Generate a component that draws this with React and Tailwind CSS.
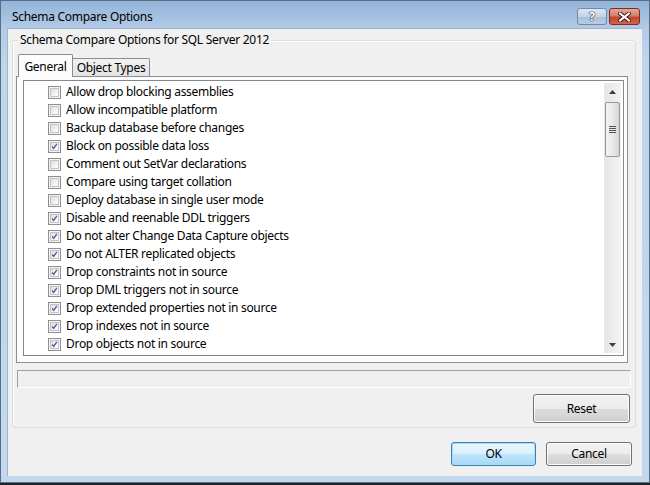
import React from "react";

const options = [
  ["Allow drop blocking assemblies", false],
  ["Allow incompatible platform", false],
  ["Backup database before changes", false],
  ["Block on possible data loss", true],
  ["Comment out SetVar declarations", false],
  ["Compare using target collation", false],
  ["Deploy database in single user mode", false],
  ["Disable and reenable DDL triggers", true],
  ["Do not alter Change Data Capture objects", true],
  ["Do not ALTER replicated objects", true],
  ["Drop constraints not in source", true],
  ["Drop DML triggers not in source", true],
  ["Drop extended properties not in source", true],
  ["Drop indexes not in source", true],
  ["Drop objects not in source", true],
];

const CheckBox = ({ checked }) => (
  <div className="w-[13px] h-[13px] shrink-0 border border-[#8e8f8f] bg-[#f4f4f4] p-[1px]">
    <div className="w-full h-full border border-[#c3c3c3] bg-[linear-gradient(135deg,#dcdcdc_0%,#f6f6f6_70%,#ffffff_100%)] flex items-center justify-center">
      {checked && (
        <svg width="9" height="9" viewBox="0 0 9 9">
          <path d="M1.5 4.5 L3.5 7 L7.5 1" fill="none" stroke="#4a5f97" strokeWidth="1.7" />
        </svg>
      )}
    </div>
  </div>
);

const WinButton = ({ children, primary, className }) => (
  <div
    className={
      "flex items-center justify-center rounded-[3px] border text-[12px] text-black " +
      (primary
        ? "border-[#3c7fb1] shadow-[inset_0_0_0_1px_#a9dcf5] bg-[linear-gradient(to_bottom,#eaf6fd_0%,#d9f0fc_50%,#bee6fd_51%,#a7d9f5_100%)] "
        : "border-[#707070] shadow-[inset_0_0_0_1px_#fbfbfb] bg-[linear-gradient(to_bottom,#f2f2f2_0%,#ebebeb_50%,#dddddd_51%,#cfcfcf_100%)] ") +
      className
    }
  >
    {children}
  </div>
);

const ScrollBar = () => (
  <div className="w-[17px] my-[2px] mr-[2px] flex flex-col bg-[linear-gradient(to_right,#e5e5e5,#f3f3f3)]">
    <div className="h-[17px] flex items-center justify-center">
      <svg width="7" height="4" viewBox="0 0 7 4">
        <path d="M3.5 0 L7 4 L0 4 Z" fill="#3e3e3e" />
      </svg>
    </div>
    <div className="mt-[2px] h-[55px] mx-[1px] rounded-[2px] border border-[#979797] bg-[linear-gradient(to_right,#f3f3f3_0%,#e8e8e8_50%,#d6d6d6_100%)] flex flex-col items-center justify-center gap-[1px]">
      <div className="w-[7px] h-[1px] bg-[#555]" />
      <div className="w-[7px] h-[1px] bg-[#555]" />
      <div className="w-[7px] h-[1px] bg-[#555]" />
      <div className="w-[7px] h-[1px] bg-[#555]" />
    </div>
    <div className="flex-1" />
    <div className="h-[17px] flex items-center justify-center">
      <svg width="7" height="4" viewBox="0 0 7 4">
        <path d="M0 0 L7 0 L3.5 4 Z" fill="#3e3e3e" />
      </svg>
    </div>
  </div>
);

export default function App() {
  return (
    <div
      className="w-[650px] h-[485px] overflow-hidden bg-white text-black tracking-[-0.3px]"
      style={{ fontFamily: '"Noto Sans", "Open Sans", sans-serif' }}
    >
      <div className="h-[483px] flex flex-col border border-[#5a6d85] bg-[linear-gradient(to_bottom,#93b4d9_0px,#b3cbe6_28px,#bfd5ec_60px,#c2d8ee_100%)]">
        {/* title bar */}
        <div className="h-[27px] flex items-start pl-[11px] pr-[9px]">
          <span className="mt-[8px] text-[12px] leading-[16px] text-black">Schema Compare Options</span>
          <div className="ml-auto mt-[7px] flex gap-[2px]">
            <div className="w-[30px] h-[17px] rounded-[3px] border border-[#6f8aab] bg-[linear-gradient(to_bottom,#dbe6f2_0%,#c3d3e6_50%,#a9bfd9_51%,#b7cce3_100%)] flex items-center justify-center">
              <span className="text-[12px] leading-none font-bold text-white [text-shadow:0_0_1px_#222,0_0_1px_#222,0_0_1px_#222]">?</span>
            </div>
            <div className="w-[31px] h-[17px] rounded-[3px] border border-[#7a2d25] bg-[linear-gradient(to_bottom,#e8a494_0%,#d5806b_45%,#c3452e_55%,#d2634a_100%)] flex items-center justify-center">
              <svg width="13" height="10" viewBox="0 0 13 10">
                <path d="M2 1.5 L11 8.5 M11 1.5 L2 8.5" stroke="#3b1a16" strokeWidth="4" strokeLinecap="square" />
                <path d="M2 1.5 L11 8.5 M11 1.5 L2 8.5" stroke="#ffffff" strokeWidth="2" strokeLinecap="square" />
              </svg>
            </div>
          </div>
        </div>

        {/* client area */}
        <div className="h-[448px] ml-[6px] mr-[7px] bg-[#f0f0f0] border-l border-t border-[#9fb4cc] flex flex-col text-[12px]">
          {/* group box */}
          <div className="relative mt-[11px] ml-[4px] w-[624px] h-[388px] border border-[#d5dfe5] rounded-[3px] shadow-[inset_1px_1px_0_#ffffff] flex flex-col">
            <span className="absolute -top-[9px] left-[5px] px-[2px] bg-[#f0f0f0] leading-[16px]">
              Schema Compare Options for SQL Server 2012
            </span>

            {/* tabs */}
            <div className="mt-[13px] ml-[5px] flex items-end h-[22px] relative z-10">
              <div className="h-[23px] -mb-[1px] w-[55px] border border-b-0 border-[#898c95] bg-[#fcfcfc] rounded-t-[2px] flex justify-center items-start pt-[3px]">
                General
              </div>
              <div className="h-[18px] w-[77px] border border-b-0 border-l-0 border-[#898c95] bg-[linear-gradient(to_bottom,#f2f2f2,#e3e3e3)] rounded-tr-[2px] flex items-center justify-center">
                Object Types
              </div>
            </div>

            {/* tab panel */}
            <div className="ml-[3px] w-[612px] h-[287px] border border-[#898c95] bg-[#fcfcfc] pt-[3px] pl-[6px] pb-[6px] pr-[2px]">
              <div className="w-[601px] h-[276px] border border-[#828790] bg-white flex overflow-hidden">
                <div className="flex-1 pt-[2px] pl-[24px] overflow-hidden">
                  {options.map(([label, checked]) => (
                    <div key={label} className="h-[18px] flex items-center gap-[5px] whitespace-nowrap">
                      <CheckBox checked={checked} />
                      <span className="leading-[16px]">{label}</span>
                    </div>
                  ))}
                  <div className="h-[18px] flex items-center">
                    <CheckBox checked={false} />
                  </div>
                </div>
                <ScrollBar />
              </div>
            </div>

            {/* status strip */}
            <div className="mt-[7px] ml-[4px] w-[614px] h-[18px] border-t border-l border-[#a0a0a0] border-r border-b border-r-white border-b-white bg-[#f0f0f0]" />

            {/* reset */}
            <div className="mt-[6px] flex">
              <WinButton className="ml-[520px] w-[97px] h-[29px]">Reset</WinButton>
            </div>
          </div>

          {/* dialog buttons */}
          <div className="mt-[14px] flex gap-[10px] ml-[443px]">
            <WinButton primary className="w-[85px] h-[24px]">OK</WinButton>
            <WinButton className="w-[86px] h-[24px]">Cancel</WinButton>
          </div>
        </div>
      </div>
      <div className="h-[2px] bg-[#222]" />
    </div>
  );
}
